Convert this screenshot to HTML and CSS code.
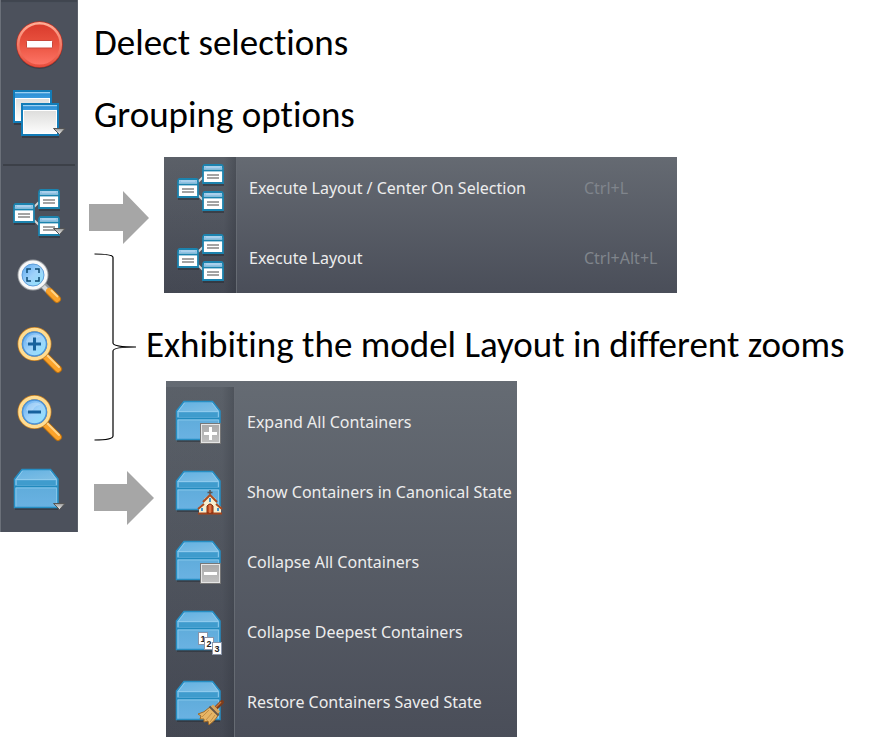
FILE: index.html
```html
<!DOCTYPE html>
<html lang="en">
<head>
<meta charset="utf-8">
<title>Model toolbar guide</title>
<link rel="stylesheet" href="styles.css">
</head>
<body>
<svg class="defs" width="0" height="0" aria-hidden="true">
  <defs>
    <linearGradient id="red" x1="0" y1="0" x2="0" y2="1"><stop offset="0" stop-color="#d93a2c"/><stop offset=".5" stop-color="#ea5340"/><stop offset="1" stop-color="#ff7668"/></linearGradient>
    <linearGradient id="redRim" x1="0" y1="0" x2="0" y2="1"><stop offset="0" stop-color="#ffab94"/><stop offset="1" stop-color="#e8503f"/></linearGradient>
    <linearGradient id="bar" x1="0" y1="0" x2="0" y2="1"><stop offset="0" stop-color="#7fc0ee"/><stop offset=".4" stop-color="#2f92d6"/><stop offset="1" stop-color="#3a9add"/></linearGradient>
    <linearGradient id="paper" x1="0" y1="0" x2="0" y2="1"><stop offset="0" stop-color="#d4d4d2"/><stop offset="1" stop-color="#ffffff"/></linearGradient>
    <linearGradient id="tri" x1="0" y1="0" x2="0" y2="1"><stop offset="0" stop-color="#999"/><stop offset="1" stop-color="#f4f4f4"/></linearGradient>
    <linearGradient id="lens" x1="0" y1="0" x2="1" y2="1"><stop offset="0" stop-color="#5aa6ee"/><stop offset=".5" stop-color="#9fd2fa"/><stop offset="1" stop-color="#8fe6fc"/></linearGradient>
    <linearGradient id="lid" x1="0" y1="0" x2="1" y2="1"><stop offset="0" stop-color="#63b1e2"/><stop offset="1" stop-color="#80bfe4"/></linearGradient>
    <linearGradient id="box" x1="0" y1="0" x2="0" y2="1"><stop offset="0" stop-color="#57a7d4"/><stop offset="1" stop-color="#6ab2e3"/></linearGradient>
    <linearGradient id="grey" x1="0" y1="0" x2="0" y2="1"><stop offset="0" stop-color="#a9a9a9"/><stop offset="1" stop-color="#c2c2c2"/></linearGradient>
    <symbol id="mini" viewBox="0 0 24 22">
      <path d="M2 21H23" stroke="#252b33" stroke-width="2" opacity=".5"/>
      <path d="M2 4Q2 1 4 1H20Q22 1 22 4V19H2Z" fill="#fff" stroke="#1c83ae" stroke-width="1.800"/>
      <path d="M3 5.500V3.500Q3 2 5 2H19Q21 2 21 3.500V5.500Z" fill="#8fc1e4"/>
      <path d="M5 3H19" stroke="#c4dff2" stroke-width="1"/>
      <path d="M2 6.500H22" stroke="#1c83ae" stroke-width="1.800"/>
      <path d="M6 11H18M6 14H18" stroke="#858585" stroke-width="1.400"/>
    </symbol>
    <symbol id="layout" viewBox="11 185 56 56">
      <path d="M34 207L39 202M34 220L39 225" stroke="#d5d5d5" stroke-width="2"/>
      <use href="#mini" x="37" y="189" width="24" height="22"/>
      <use href="#mini" x="12" y="203" width="24" height="22"/>
      <use href="#mini" x="37" y="216" width="24" height="22"/>
    </symbol>
    <symbol id="chest" viewBox="11 462 56 56">
      <path d="M15 509H58" stroke="#252b33" stroke-width="2" opacity=".5"/>
      <path d="M14.500 479L22 469.500H50.500L58 479V507.500H14.500Z" fill="url(#box)" stroke="#268ec3" stroke-width="1.500"/>
      <path d="M15.500 479.500L22.500 470.500H50L57 479.500Z" fill="url(#lid)"/>
      <path d="M16 479.500H56.500L50 471M16 479.500L22.500 471" stroke="#8fcbed" stroke-width="1" fill="none"/>
      <path d="M17 480.500H55.500V485H17Z" fill="#3f9ccd"/>
      <path d="M15 486.500H57.500" stroke="#218abd" stroke-width="1.500"/>
      <path d="M16 506.500V488H56.500V506.500" stroke="#83c5e9" stroke-width="1" fill="none"/>
      <path d="M16 479V485M56.500 479V485" stroke="#83c5e9" stroke-width="1"/>
    </symbol>
    <symbol id="glass" viewBox="0 0 56 56">
      <path d="M34 34L47 47" stroke="#b66e12" stroke-width="8" stroke-linecap="round"/>
      <path d="M32 32L47 47" stroke="#fba32b" stroke-width="6" stroke-linecap="round"/>
      <path d="M34 31L48 45" stroke="#ffd58a" stroke-width="2" stroke-linecap="round"/>
      <circle cx="23.500" cy="22" r="14.500" fill="none" stroke="#c98325" stroke-width="5"/>
      <circle cx="23.500" cy="22" r="14.500" fill="none" stroke="#ffdd93" stroke-width="3.500"/>
      <circle cx="23.500" cy="22" r="12" fill="url(#lens)" stroke="#4d94d9" stroke-width="1.500"/>
      <path d="M15 20A9 9 0 0 1 30 15Q24 15 22 20Q19 23 15 20Z" fill="#fff" opacity=".25"/>
    </symbol>
  </defs>
</svg>

<main class="guide">
  <nav class="toolbar" aria-label="Model tools">
    <button type="button" class="tool" aria-label="Delete selections">
      <svg class="icon" viewBox="11 17 56 56">
        <circle cx="39.500" cy="46" r="23" fill="#2b2f37" opacity=".45"/>
        <circle cx="39.500" cy="44.500" r="23.300" fill="#c43325"/>
        <circle cx="39.500" cy="44.500" r="21.300" fill="url(#red)" stroke="url(#redRim)" stroke-width="2.500"/>
        <rect x="26.500" y="40.500" width="26" height="7.500" rx="1" fill="#fff" stroke="#c8483c" stroke-width="1"/>
      </svg>
    </button>
    <button type="button" class="tool" aria-label="Grouping options">
      <svg class="icon" viewBox="11 87 56 56">
        <path d="M14 124H22M22 137H59" stroke="#252b33" stroke-width="2" opacity=".5"/>
        <rect x="14" y="91" width="37" height="31" fill="url(#paper)" stroke="#127cb8" stroke-width="2"/>
        <rect x="15" y="92" width="35" height="6" fill="url(#bar)"/>
        <path d="M15 92.500H50" stroke="#9bd0f2"/>
        <rect x="15.500" y="98.500" width="34" height="22" fill="none" stroke="#fff" stroke-width="1"/>
        <rect x="22" y="104" width="36" height="31" fill="url(#paper)" stroke="#127cb8" stroke-width="2"/>
        <rect x="23" y="105" width="34" height="5" fill="url(#bar)"/>
        <path d="M23 105.500H57" stroke="#9bd0f2"/>
        <rect x="23.500" y="110.500" width="33" height="23" fill="none" stroke="#fff" stroke-width="1"/>
        <path d="M53.500 128.500H65L59.500 134.500Z" fill="url(#tri)" stroke="#555" stroke-width="1"/>
      </svg>
    </button>
    <hr class="rule">
    <button type="button" class="tool" aria-label="Layout">
      <svg class="icon" viewBox="11 185 56 56">
        <use href="#layout" x="11" y="185" width="56" height="56"/>
        <path d="M53.500 228.500H65L59.500 234.500Z" fill="url(#tri)" stroke="#555" stroke-width="1"/>
      </svg>
    </button>
    <button type="button" class="tool tool-zoom" aria-label="Zoom to fit">
      <svg class="icon" viewBox="11 254 56 56">
        <path d="M43 285L49 291" stroke="#8f9499" stroke-width="7"/>
        <path d="M42 285L48 291" stroke="#d6d8da" stroke-width="4"/>
        <path d="M50 292L57 299" stroke="#bd7414" stroke-width="8" stroke-linecap="round"/>
        <path d="M49 291L57 299" stroke="#fba32b" stroke-width="6" stroke-linecap="round"/>
        <path d="M51 290L58 297" stroke="#ffd58a" stroke-width="2"/>
        <circle cx="33" cy="275" r="13" fill="none" stroke="#9da1a5" stroke-width="5"/>
        <circle cx="33" cy="275" r="12.800" fill="none" stroke="#f8f8f8" stroke-width="3.500"/>
        <circle cx="33" cy="275" r="11" fill="url(#lens)" stroke="#5f9fdc" stroke-width="1"/>
        <path d="M27 273V269H31M35 269H39V273M39 277V281H35M31 281H27V277" fill="none" stroke="#0c4a72" stroke-width="1.500"/>
      </svg>
    </button>
    <button type="button" class="tool tool-zoom" aria-label="Zoom in">
      <svg class="icon" viewBox="0 0 56 56">
        <use href="#glass"/>
        <path d="M17 22H30M23.500 15.500V28.500" stroke="#17629d" stroke-width="3"/>
      </svg>
    </button>
    <button type="button" class="tool tool-zoom" aria-label="Zoom out">
      <svg class="icon" viewBox="0 0 56 56">
        <use href="#glass"/>
        <path d="M17 22H30" stroke="#17629d" stroke-width="3"/>
      </svg>
    </button>
    <button type="button" class="tool" aria-label="Containers">
      <svg class="icon" viewBox="11 459 56 56">
        <use href="#chest" x="11" y="462" width="56" height="56"/>
        <path d="M53.500 503.500H65L59.500 509.500Z" fill="url(#tri)" stroke="#555" stroke-width="1"/>
      </svg>
    </button>
  </nav>

  <div class="notes">
    <h2 class="note">Delect selections</h2>
    <h2 class="note">Grouping options</h2>
    <div class="details">
      <div class="pointers" aria-hidden="true">
        <svg class="arrow arrow-first" viewBox="0 0 60 54"><path d="M0 13H34V0L60 27L34 53V40H0Z" fill="#a6a6a6"/></svg>
        <svg class="brace" viewBox="0 0 43 188"><path d="M0.500 1Q19 1 19 4.500V90Q19 94 42 94Q19 94 19 98V183Q19 187 0.500 187" fill="none" stroke="#000" stroke-width="1.200"/></svg>
        <svg class="arrow arrow-second" viewBox="0 0 60 54"><path d="M0 13H33V0L60 27L33 54V40H0Z" fill="#a6a6a6"/></svg>
      </div>
      <div class="menus">
        <ul class="menu menu-layout">
          <li><button type="button" class="item"><span class="cell"><svg class="icon"><use href="#layout"/></svg></span><span class="label">Execute Layout / Center On Selection</span><kbd class="keys">Ctrl+L</kbd></button></li>
          <li><button type="button" class="item"><span class="cell"><svg class="icon"><use href="#layout"/></svg></span><span class="label">Execute Layout</span><kbd class="keys">Ctrl+Alt+L</kbd></button></li>
        </ul>
        <h2 class="note note-zoom">Exhibiting the model Layout in different zooms</h2>
        <ul class="menu menu-containers">
          <li><button type="button" class="item"><span class="cell"><svg class="icon" viewBox="11 462 56 56"><use href="#chest" x="11" y="462" width="56" height="56"/>
            <rect x="38.500" y="491.500" width="20" height="20" fill="url(#grey)" stroke="#777" stroke-width="1"/><rect x="39.500" y="492.500" width="18" height="18" fill="none" stroke="#e6e6e6"/><path d="M42 501.500H55M48.500 495V508" stroke="#fff" stroke-width="3"/></svg></span><span class="label">Expand All Containers</span></button></li>
          <li><button type="button" class="item"><span class="cell"><svg class="icon" viewBox="11 462 56 56"><use href="#chest" x="11" y="462" width="56" height="56"/>
            <path d="M48 488V494M45.500 490.500H50.500" stroke="#555" stroke-width="1.500"/>
            <path d="M37 511V505L42 501V497L48 492L54 497V501L59 505V511Z" fill="#f7efcf"/>
            <path d="M41 500L48 493L55 500M36 507L42 502M60 507L54 502" fill="none" stroke="#a94b20" stroke-width="2"/>
            <path d="M36 511.500H60" stroke="#a4441c" stroke-width="2"/>
            <path d="M45 511V504Q48 500 51 504V511Z" fill="#c54d20" stroke="#7c2e12" stroke-width="1"/>
            <path d="M48 503V511" stroke="#f0a070"/>
            <path d="M48 496V500M40 506V509M56 506V509" stroke="#3f95cd" stroke-width="2"/></svg></span><span class="label">Show Containers in Canonical State</span></button></li>
          <li><button type="button" class="item"><span class="cell"><svg class="icon" viewBox="11 462 56 56"><use href="#chest" x="11" y="462" width="56" height="56"/>
            <rect x="38.500" y="491.500" width="20" height="20" fill="url(#grey)" stroke="#777" stroke-width="1"/><rect x="39.500" y="492.500" width="18" height="18" fill="none" stroke="#e6e6e6"/><path d="M42 501.500H55" stroke="#fff" stroke-width="3"/></svg></span><span class="label">Collapse All Containers</span></button></li>
          <li><button type="button" class="item"><span class="cell"><svg class="icon" viewBox="11 462 56 56"><use href="#chest" x="11" y="462" width="56" height="56"/>
            <g class="digits"><rect x="36.500" y="490.500" width="9" height="12"/><text x="41" y="500">1</text><rect x="42.500" y="495.500" width="9" height="12"/><text x="47" y="505">2</text><rect x="50.500" y="500.500" width="9" height="12"/><text x="55" y="510">3</text></g></svg></span><span class="label">Collapse Deepest Containers</span></button></li>
          <li><button type="button" class="item"><span class="cell"><svg class="icon" viewBox="11 462 56 56"><use href="#chest" x="11" y="462" width="56" height="56"/>
            <path d="M54 496L60 490" stroke="#7b3c1c" stroke-width="4" stroke-linecap="round"/>
            <path d="M54 495L59 490" stroke="#c5763d" stroke-width="1.500"/>
            <path d="M48 495Q42 501 36 502L39 504L38 507L42 507L42 510L46 509L47 513Q54 508 57 502Z" fill="#e6b566" stroke="#a06a28" stroke-width="1"/>
            <path d="M47 498L40 505M50 501L44 508M53 503L48 510" stroke="#c48f45" stroke-width="1"/>
            <path d="M47.500 494.500L56.500 503.500" stroke="#665547" stroke-width="2"/><path d="M50 493.500L57 500.500" stroke="#d9a65d" stroke-width="3"/></svg></span><span class="label">Restore Containers Saved State</span></button></li>
        </ul>
      </div>
    </div>
  </div>
</main>
</body>
</html>
```
FILE: styles.css
```css
* { box-sizing: border-box; }

body {
  margin: 0;
  background: #fff;
  color: #000;
  font-family: "Noto Sans", "Open Sans", sans-serif;
}

.defs { position: absolute; }

.guide {
  display: flex;
  align-items: flex-start;
}

.toolbar {
  display: flex;
  flex-direction: column;
  flex: none;
  width: 78px;
  padding: 10px 0;
  background: #4c515c;
  border-left: 1px solid #6b7079;
  border-right: 1px solid #5b606a;
  box-shadow: inset 0 2px 1px #40454f;
}

.tool,
.item {
  border: 0;
  padding: 0;
  background: none;
  color: inherit;
  font: inherit;
}

.tool {
  display: flex;
  align-items: center;
  justify-content: center;
  height: 70px;
}

.tool-zoom { height: 68px; }

.icon {
  display: block;
  flex: none;
  width: 56px;
  height: 56px;
}

.rule {
  width: 72px;
  height: 2px;
  margin: 14px auto 12px;
  border: 0;
  background: #3c4048;
}

.notes {
  flex: 1;
  min-width: 0;
  padding-top: 7px;
}

.note {
  margin: 0;
  padding-left: 16px;
  font-family: Carlito, Lato, sans-serif;
  font-size: 37px;
  font-weight: 400;
  font-variant-ligatures: none;
  line-height: 72px;
  white-space: nowrap;
}

.details { display: flex; }

.pointers {
  display: flex;
  flex-direction: column;
  flex: none;
  width: 76px;
}

.arrow {
  width: 60px;
  height: 54px;
}

.arrow-first { margin: 40px 0 0 11px; }

.brace {
  width: 43px;
  height: 188px;
  margin: 8px 0 0 16px;
}

.arrow-second { margin: 30px 0 0 16px; }

.menus { padding-top: 6px; }

.menu {
  width: fit-content;
  margin: 0;
  padding: 0;
  list-style: none;
  overflow: hidden;
  color: #ededed;
  font-size: 16px;
}

.item {
  display: flex;
  align-items: center;
  width: 100%;
  height: 70px;
  text-align: left;
}

.cell { flex: none; }

.label {
  flex: 1;
  padding-left: 12px;
  white-space: nowrap;
}

.keys {
  min-width: 93px;
  color: #80858c;
  font-family: inherit;
}

.menu-layout {
  margin-left: 10px;
  background:
    linear-gradient(90deg, rgba(30, 34, 42, .14) 60px, rgba(30, 34, 42, .36) 72px, #666b73 72px, #666b73 73px, transparent 73px),
    linear-gradient(#656a72, #4a4e59);
}

.menu-layout li:first-child { margin-top: -4px; }

.menu-layout .cell {
  width: 73px;
  padding-left: 11px;
}

.menu-layout .label { padding-right: 58px; }

.note-zoom {
  margin-left: -8px;
  padding: 16px 0 0;
}

.menu-containers {
  margin-left: 12px;
  padding-top: 6px;
  background:
    linear-gradient(90deg, rgba(30, 34, 42, .14) 56px, rgba(30, 34, 42, .32) 68px, #666b73 68px, #666b73 69px, transparent 69px) 0 6px no-repeat,
    linear-gradient(#656b73, #4a4e59);
}

.menu-containers .cell {
  width: 69px;
  padding-left: 7px;
}

.menu-containers .label { padding-right: 5px; }

.digits rect {
  fill: #fff;
  stroke: #8a94a8;
}

.digits text {
  fill: #222;
  font: 700 9px "Liberation Sans", sans-serif;
  text-anchor: middle;
}
```
